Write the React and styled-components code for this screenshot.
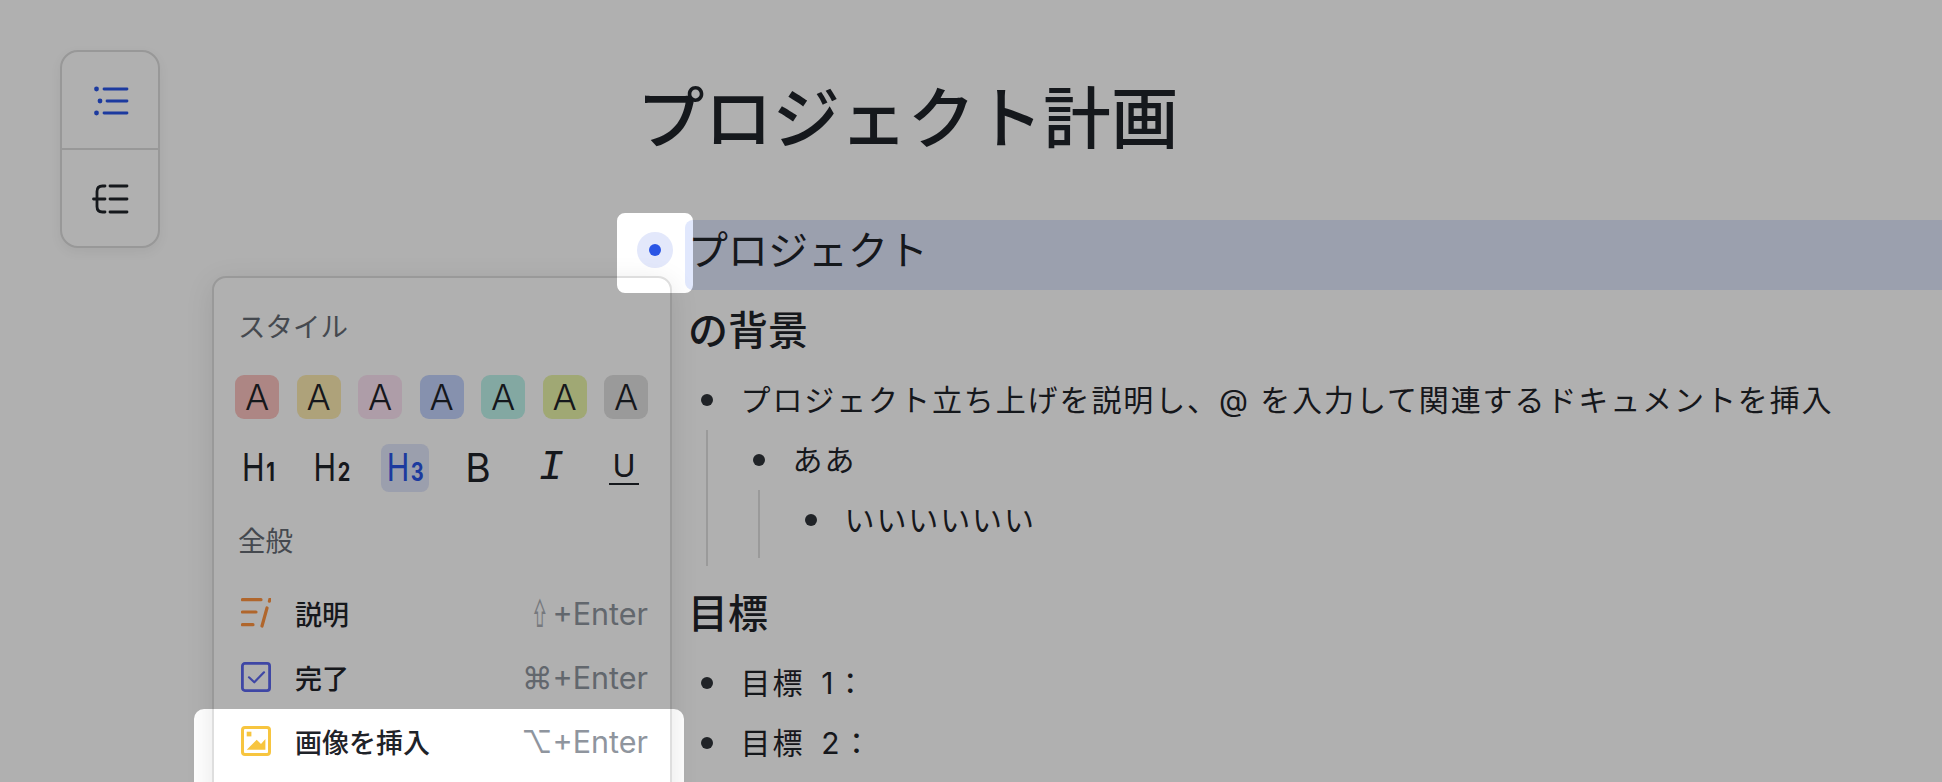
import * as React from "react";
import styled, { createGlobalStyle } from "styled-components";

const GlobalStyle = createGlobalStyle`
  html, body {
    margin: 0;
    height: 100%;
    overflow: hidden;
    background: #fff;
  }
  body {
    font-family: Inter, "Noto Sans CJK JP", "DejaVu Sans", sans-serif;
    color: #1f2329;
  }
`;

const Page = styled.div`
  position: relative;
  display: flex;
  width: 1942px;
  height: 782px;
  overflow: hidden;
`;

const LeftRail = styled.aside`
  flex: 0 0 640px;
  box-sizing: border-box;
  padding: 50px 0 0 60px;
`;

const OutlineCard = styled.div`
  width: 100px;
  height: 198px;
  box-sizing: border-box;
  display: flex;
  flex-direction: column;
  background: #fff;
  border: 2px solid #dcdcdc;
  border-radius: 18px;
  box-shadow: 0 4px 12px rgba(0, 0, 0, 0.06);
`;

const OutlineButton = styled.div`
  flex: 1;
  display: flex;
  align-items: center;
  justify-content: center;
  & + & {
    border-top: 2px solid #dcdcdc;
  }
`;

const Doc = styled.main`
  flex: 1;
  min-width: 0;
`;

const Title = styled.h1`
  margin: 0 0 0 -3px;
  height: 220px;
  box-sizing: border-box;
  padding-top: 74px;
  font-size: 67.5px;
  line-height: 90px;
  font-weight: 500;
  letter-spacing: 0.2px;
`;

const Heading = styled.h2`
  position: relative;
  display: flex;
  align-items: center;
  box-sizing: border-box;
  margin: ${(p) => p.$margin || "0"};
  height: 70px;
  padding-left: ${(p) => (p.$active ? "3px" : "48px")};
  padding-bottom: ${(p) => (p.$active ? "14px" : "5px")};
  margin-left: ${(p) => (p.$active ? "45px" : "0")};
  background: ${(p) => (p.$active ? "#e1e8fd" : "transparent")};
  border-radius: 8px 0 0 8px;
  font-size: 40px;
  font-weight: ${(p) => (p.$active ? 400 : 500)};
`;

const Handle = styled.span`
  position: absolute;
  left: -48px;
  top: 12px;
  width: 36px;
  height: 36px;
  display: flex;
  align-items: center;
  justify-content: center;
  border-radius: 50%;
  background: #e3e8fb;
  &::after {
    content: "";
    width: 12px;
    height: 12px;
    border-radius: 50%;
    background: #2a55e5;
  }
`;

const List = styled.div`
  margin-left: 52px;
  margin-top: ${(p) => p.$top || 0}px;
`;

const Nested = styled.div`
  margin-left: 14px;
  padding: 0 0 8px 36px;
  border-left: 2px solid #e0e0e0;
`;

const Item = styled.div`
  display: flex;
  align-items: center;
  height: 60px;
  font-size: 30px;
  letter-spacing: 1.9px;
  &::before {
    content: "";
    flex: 0 0 12px;
    height: 12px;
    margin: 0 27.5px 0 9px;
    border-radius: 50%;
    background: #2f3439;
  }
`;

const ItemText = styled.span`
  margin-top: -5px;
`;

const Menu = styled.div`
  position: absolute;
  left: 212px;
  top: 276px;
  width: 460px;
  box-sizing: border-box;
  padding: 29px 22px 60px 21px;
  background: #fff;
  border: 2px solid #dedede;
  border-radius: 14px;
  box-shadow: 0 6px 28px rgba(0, 0, 0, 0.1);
`;

const MenuLabel = styled.div`
  height: 40px;
  line-height: 40px;
  padding-left: 3px;
  margin-top: ${(p) => p.$top || 0}px;
  font-size: 27.5px;
  color: #646a73;
`;

const SwatchRow = styled.div`
  display: flex;
  justify-content: space-between;
  margin-top: 28px;
`;

const Swatch = styled.div`
  width: 44px;
  height: 44px;
  display: flex;
  align-items: center;
  justify-content: center;
  border-radius: 9px;
  background: ${(p) => p.$bg};
  font-size: 36px;
  font-weight: 300;
  line-height: 1;
`;

const FormatRow = styled.div`
  display: flex;
  justify-content: space-between;
  margin-top: 25px;
`;

const FormatButton = styled.div`
  width: 48px;
  height: 48px;
  display: flex;
  align-items: center;
  justify-content: center;
  border-radius: 8px;
  background: ${(p) => (p.$active ? "#e1e6fb" : "transparent")};
  color: ${(p) => (p.$active ? "#2955e7" : "#1f2329")};
`;

const HeadingGlyph = styled.span`
  display: inline-block;
  margin-top: -2px;
  transform: scaleX(0.8);
  font-size: 38px;
  line-height: 1;
  white-space: nowrap;
  small {
    font-size: 25px;
    font-weight: 700;
    margin-left: 2px;
  }
`;

const BoldGlyph = styled.span`
  margin-top: -1px;
  font-size: 39px;
  line-height: 1;
`;

const ItalicGlyph = styled.span`
  margin-top: -1px;
  font-family: "Liberation Mono", monospace;
  font-style: italic;
  font-size: 42px;
  line-height: 1;
`;

const UnderGlyph = styled.span`
  width: 30px;
  text-align: center;
  font-size: 31px;
  line-height: 30px;
  padding-bottom: 2px;
  border-bottom: 2.5px solid currentColor;
`;

const ActionList = styled.div`
  margin-top: 20px;
`;

const Action = styled.div`
  display: flex;
  align-items: center;
  height: 64px;
  padding-left: 6px;
  svg {
    flex: none;
  }
`;

const ActionName = styled.span`
  margin-left: 24px;
  font-size: 27px;
  font-weight: 500;
`;

const Shortcut = styled.span`
  margin-left: auto;
  font-size: 30.5px;
  color: #8f959e;
  white-space: nowrap;
`;

const ShiftKey = styled.span`
  display: inline-block;
  transform: scale(0.45, 1.2);
  margin-right: -3px;
  opacity: 0.75;
`;

const Dimmer = styled.div`
  position: absolute;
  inset: 0;
  pointer-events: none;
  background: rgba(0, 0, 0, 0.31);
  clip-path: path(
    evenodd,
    "M0 0H1942V782H0Z M625 213H685a8 8 0 0 1 8 8V285a8 8 0 0 1 -8 8H625a8 8 0 0 1 -8 -8V221a8 8 0 0 1 8 -8Z M204 709H674a10 10 0 0 1 10 10V790H194V719a10 10 0 0 1 10 -10Z"
  );
`;

const swatches = ["#fbc3bf", "#fcebb1", "#fde4f3", "#c3d3fc", "#bef3eb", "#e8f3a8", "#dfdfdf"];

const ListIcon = () => (
  <svg width="40" height="40" viewBox="0 0 40 40" fill="none" stroke="#2955e7" strokeWidth="2.8" strokeLinecap="round">
    <path d="M14 9H37M17 21H37M14 33H37" />
    <g fill="#2955e7" stroke="none">
      <circle cx="6.5" cy="9" r="2.4" />
      <circle cx="10" cy="21" r="2.4" />
      <circle cx="6.5" cy="33" r="2.4" />
    </g>
  </svg>
);

const CollapseIcon = () => (
  <svg width="40" height="40" viewBox="0 0 40 40" fill="none" stroke="#1f2329" strokeWidth="2.8" strokeLinecap="round">
    <path d="M20 8H37M20 21H37M20 34H37" />
    <path d="M15 8H12.5C9 8 7 10 7 13.5V28.5C7 32 9 34 12.5 34H15M3.5 21H15" />
  </svg>
);

const DescribeIcon = () => (
  <svg width="30" height="30" viewBox="0 0 30 30" fill="none" stroke="#ff9440" strokeWidth="3.2" strokeLinecap="round">
    <path d="M1.5 1.7H20M1.5 14H15M1.5 26.7H12M26 10L21 28M29 1L28.4 3.2" />
  </svg>
);

const DoneIcon = () => (
  <svg width="30" height="30" viewBox="0 0 30 30" fill="none" stroke="#5c68f0">
    <rect x="1.4" y="1.4" width="27.2" height="27.2" rx="2.5" strokeWidth="2.8" />
    <path d="M8 15.3L13.3 20.3L23 10.3" strokeWidth="2.2" strokeLinecap="round" strokeLinejoin="round" />
  </svg>
);

const ImageIcon = () => (
  <svg width="30" height="30" viewBox="0 0 30 30" fill="none">
    <rect x="1.5" y="1.5" width="27" height="27" rx="2.5" stroke="#f7c53f" strokeWidth="3" />
    <rect x="5.7" y="5.7" width="4.7" height="4.7" fill="#f7c53f" />
    <path d="M5.7 23.8L15.7 13.7L20 18L24.4 13V23.8Z" fill="#f7c53f" />
  </svg>
);

export default function App() {
  return (
    <Page>
      <GlobalStyle />
      <LeftRail>
        <OutlineCard>
          <OutlineButton>
            <ListIcon />
          </OutlineButton>
          <OutlineButton>
            <CollapseIcon />
          </OutlineButton>
        </OutlineCard>
      </LeftRail>

      <Doc>
        <Title>プロジェクト計画</Title>
        <Heading $active>
          <Handle />
          プロジェクト
        </Heading>
        <Heading $margin="5px 0 0">の背景</Heading>
        <List $top={5}>
          <Item>
            <ItemText>プロジェクト立ち上げを説明し、@ を入力して関連するドキュメントを挿入</ItemText>
          </Item>
          <Nested>
            <Item>
              <ItemText>ああ</ItemText>
            </Item>
            <Nested>
              <Item>
                <ItemText>いいいいいい</ItemText>
              </Item>
            </Nested>
          </Nested>
        </List>
        <Heading $margin="12px 0 0">目標</Heading>
        <List $top={5}>
          <Item>
            <ItemText>目標{"\u2002"}1：</ItemText>
          </Item>
          <Item>
            <ItemText>目標{"\u2002"}2：</ItemText>
          </Item>
        </List>
      </Doc>

      <Menu>
        <MenuLabel>スタイル</MenuLabel>
        <SwatchRow>
          {swatches.map((bg) => (
            <Swatch key={bg} $bg={bg}>
              A
            </Swatch>
          ))}
        </SwatchRow>
        <FormatRow>
          <FormatButton>
            <HeadingGlyph>
              H<small>1</small>
            </HeadingGlyph>
          </FormatButton>
          <FormatButton>
            <HeadingGlyph>
              H<small>2</small>
            </HeadingGlyph>
          </FormatButton>
          <FormatButton $active>
            <HeadingGlyph>
              H<small>3</small>
            </HeadingGlyph>
          </FormatButton>
          <FormatButton>
            <BoldGlyph>B</BoldGlyph>
          </FormatButton>
          <FormatButton>
            <ItalicGlyph>I</ItalicGlyph>
          </FormatButton>
          <FormatButton>
            <UnderGlyph>U</UnderGlyph>
          </FormatButton>
        </FormatRow>
        <MenuLabel $top={29}>全般</MenuLabel>
        <ActionList>
          <Action>
            <DescribeIcon />
            <ActionName>説明</ActionName>
            <Shortcut>
              <ShiftKey>⇧</ShiftKey>+Enter
            </Shortcut>
          </Action>
          <Action>
            <DoneIcon />
            <ActionName>完了</ActionName>
            <Shortcut>⌘+Enter</Shortcut>
          </Action>
          <Action>
            <ImageIcon />
            <ActionName>画像を挿入</ActionName>
            <Shortcut>⌥+Enter</Shortcut>
          </Action>
        </ActionList>
      </Menu>

      <Dimmer />
    </Page>
  );
}
